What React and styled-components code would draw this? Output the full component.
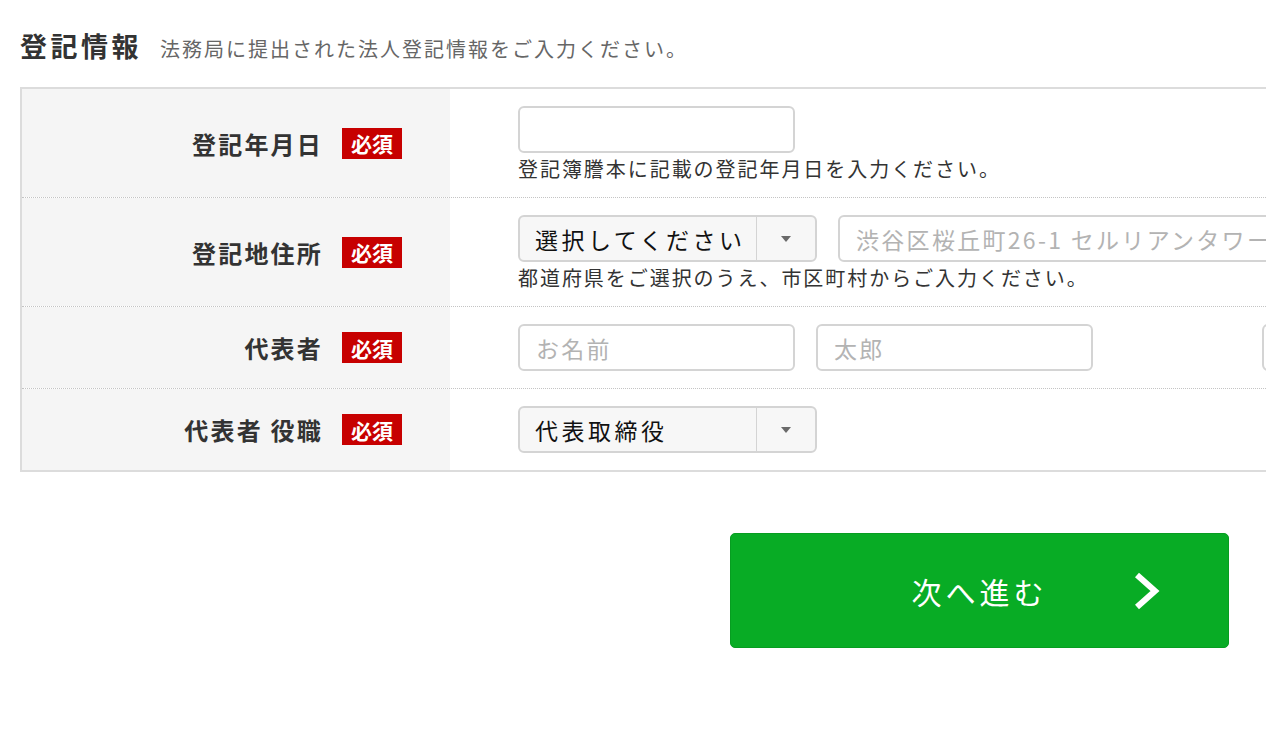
import React from "react";
import styled, { createGlobalStyle } from "styled-components";

const Global = createGlobalStyle`
  html, body { margin: 0; padding: 0; background: #fff; }
  body {
    font-family: "Noto Sans CJK JP", "Noto Sans", sans-serif;
    color: #333;
    overflow: hidden;
  }
`;

const Page = styled.div`
  width: 1266px;
  height: 744px;
  overflow: hidden;
  padding: 26px 0 0 20px;
  box-sizing: border-box;
`;

const HeadingRow = styled.div`
  display: flex;
  align-items: baseline;
  gap: 20px;
  height: 40px;
  margin-bottom: 21px;
`;

const Title = styled.h2`
  margin: 0;
  font-size: 27px;
  font-weight: 700;
  letter-spacing: 3.5px;
  color: #333;
  line-height: 40px;
`;

const Subtitle = styled.span`
  font-size: 20px;
  letter-spacing: 2px;
  color: #666;
  margin-left: -2px;
`;

const Table = styled.div`
  width: 1700px;
  border: 2px solid #dcdcdc;
  border-right: none;
`;

const Row = styled.div`
  display: grid;
  grid-template-columns: 428px 1fr;
  border-top: ${(p) => (p.$first ? "none" : "1px dotted #c4c4c4")};
`;

const LabelCell = styled.div`
  background: #f5f5f5;
  display: flex;
  align-items: center;
  justify-content: flex-end;
  gap: 19px;
  padding-right: 48px;
`;

const LabelText = styled.span`
  font-size: 24px;
  font-weight: 700;
  letter-spacing: 2.2px;
  color: #333;
`;

const Badge = styled.span`
  display: inline-flex;
  align-items: center;
  justify-content: center;
  width: 60px;
  height: 31px;
  background: #c70000;
  color: #fff;
  font-size: 21px;
  font-weight: 700;
  letter-spacing: 0;
`;

const FieldCell = styled.div`
  padding: 17px 0 17px 68px;
  display: flex;
  flex-direction: column;
`;

const Controls = styled.div`
  display: flex;
  gap: 21px;
  align-items: center;
`;

const TextInput = styled.div`
  box-sizing: border-box;
  width: ${(p) => p.$w || 277}px;
  height: 47px;
  border: 2px solid #d4d4d4;
  border-radius: 6px;
  background: #fff;
  padding: 0 16px;
  display: flex;
  align-items: center;
  font-size: 23px;
  letter-spacing: 2.3px;
  color: #b3b3b3;
  white-space: nowrap;
  overflow: hidden;
  margin-left: ${(p) => p.$ml || 0}px;
`;

const Select = styled.div`
  box-sizing: border-box;
  width: 299px;
  height: 47px;
  border: 2px solid #d4d4d4;
  border-radius: 6px;
  background: #f7f7f7;
  display: flex;
  align-items: stretch;
`;

const SelectValue = styled.div`
  flex: 1;
  display: flex;
  align-items: center;
  padding-left: 15px;
  font-size: 23px;
  letter-spacing: 3.5px;
  color: #111;
  white-space: nowrap;
`;

const SelectArrow = styled.div`
  width: 58px;
  border-left: 1px solid #d4d4d4;
  display: flex;
  align-items: center;
  justify-content: center;
  &::after {
    content: "";
    border-left: 5px solid transparent;
    border-right: 5px solid transparent;
    border-top: 6px solid #6a6a6a;
  }
`;

const Help = styled.div`
  margin-top: 4px;
  font-size: 20px;
  line-height: 23px;
  letter-spacing: 1.95px;
  color: #333;
  white-space: nowrap;
`;

const Footer = styled.div`
  width: 1246px;
  display: flex;
  justify-content: flex-end;
  padding-right: 37px;
  box-sizing: border-box;
  margin-top: 61px;
`;

const NextButton = styled.button`
  position: relative;
  width: 499px;
  height: 115px;
  background: #08ac25;
  border: 1px solid #079d21;
  border-radius: 5px;
  color: #fff;
  font-family: "Noto Sans CJK JP", sans-serif;
  font-size: 30px;
  letter-spacing: 4px;
  display: flex;
  align-items: center;
  justify-content: center;
  cursor: pointer;
  padding: 0;
`;

const Chevron = styled.svg`
  position: absolute;
  right: 68px;
  top: 50%;
  transform: translateY(-50%);
`;

const Arrow = () => (
  <Chevron width="27" height="38" viewBox="0 0 27 38">
    <path d="M4 3 L22 19 L4 35" fill="none" stroke="#fff" strokeWidth="6" strokeLinejoin="miter" />
  </Chevron>
);

const Field = ({ label, children, help }) => (
  <>
    <LabelCell>
      <LabelText>{label}</LabelText>
      <Badge>必須</Badge>
    </LabelCell>
    <FieldCell>
      <Controls>{children}</Controls>
      {help && <Help>{help}</Help>}
    </FieldCell>
  </>
);

export default function App() {
  return (
    <>
      <Global />
      <Page>
        <HeadingRow>
          <Title>登記情報</Title>
          <Subtitle>法務局に提出された法人登記情報をご入力ください。</Subtitle>
        </HeadingRow>
        <Table>
          <Row $first>
            <Field label="登記年月日" help="登記簿謄本に記載の登記年月日を入力ください。">
              <TextInput />
            </Field>
          </Row>
          <Row>
            <Field label="登記地住所" help="都道府県をご選択のうえ、市区町村からご入力ください。">
              <Select>
                <SelectValue>選択してください</SelectValue>
                <SelectArrow />
              </Select>
              <TextInput $w={640}>渋谷区桜丘町26-1 セルリアンタワー</TextInput>
            </Field>
          </Row>
          <Row>
            <Field label="代表者">
              <TextInput>お名前</TextInput>
              <TextInput>太郎</TextInput>
              <TextInput $ml={148} />
            </Field>
          </Row>
          <Row>
            <Field label="代表者 役職">
              <Select>
                <SelectValue>代表取締役</SelectValue>
                <SelectArrow />
              </Select>
            </Field>
          </Row>
        </Table>
        <Footer>
          <NextButton>
            次へ進む
            <Arrow />
          </NextButton>
        </Footer>
      </Page>
    </>
  );
}
